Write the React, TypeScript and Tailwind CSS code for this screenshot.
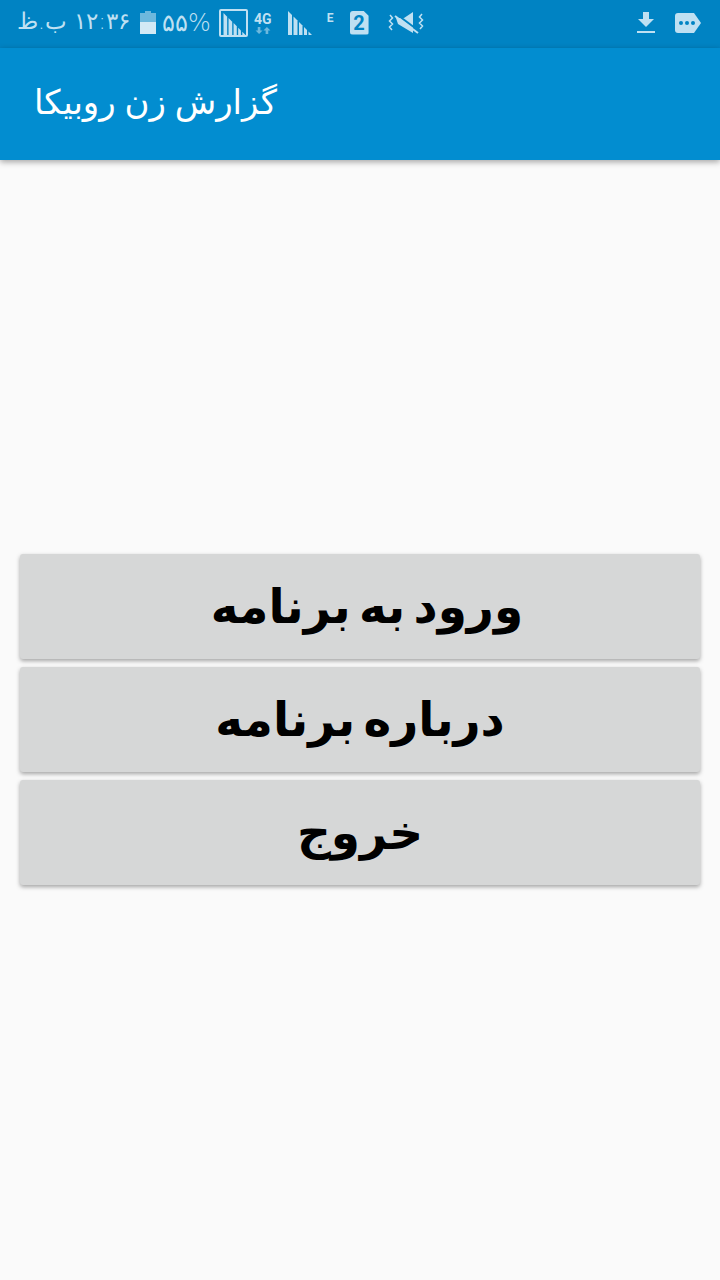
import React from 'react';

const ICON = '#bfe0f2';

function SignalBars({ className = '' }: { className?: string }) {
  return (
    <svg viewBox="0 0 24 24" className={className} fill={ICON}>
      <path d="M0 0l4 4v20H0z" />
      <path d="M5.500 5.500l4 4V24h-4z" />
      <path d="M11 11l3.500 3.500V24H11z" />
      <path d="M16 16l3 3v5h-3z" />
      <path d="M20.500 20.500L24 24h-3.500z" />
    </svg>
  );
}

function StatusBar() {
  return (
    <div className="h-12 bg-[#0083c3] flex items-center pl-[17px] pr-[19px] text-[#bfe0f2] shrink-0">
      <span dir="rtl" className="text-[23px] leading-none mb-[6px] font-['DejaVu_Sans',sans-serif] font-extralight w-[113px] whitespace-nowrap">۱۲:۳۶ ب.ظ</span>

      {/* battery */}
      <div className="ml-[10px] w-[16px] h-[25px] mt-[-2px] flex flex-col items-center">
        <div className="w-[6px] h-[2px] bg-[#6db8dd]" />
        <div className="w-[16px] h-[9px] bg-[#6db8dd]" />
        <div className="w-[16px] h-[12px] bg-[#d3e9f5]" />
      </div>

      <span className="ml-[6px] text-[24px] leading-none mb-[3px] font-['DejaVu_Sans',sans-serif] font-extralight whitespace-nowrap">۵۵%</span>

      {/* boxed signal */}
      <div className="ml-[8px] w-[29px] h-[28px] border-2 border-[#bfe0f2] rounded-[2px] p-[2px] pb-0 pr-0 mt-[-2px] flex">
        <SignalBars className="w-full h-full" />
      </div>

      {/* 4G */}
      <div className="ml-[5px] w-[20px] flex flex-col items-center mt-[-3px]">
        <span className="text-[14px] leading-[14px] font-bold font-['Roboto',sans-serif]">4G</span>
        <svg viewBox="0 0 18 8" className="w-[16px] h-[7px] mt-[1px]" fill="#6db8dd">
          <path d="M3 0h3v4h2.500L4.500 8 .5 4H3zM12 8h3V4h2.500L13.500 0 9.500 4H12z" />
        </svg>
      </div>

      <SignalBars className="ml-[15px] w-[24px] h-[24px] mt-[-2px]" />

      <span className="ml-[15px] text-[12px] leading-none font-bold font-['Roboto',sans-serif] mb-[12px]">E</span>

      {/* sim 2 */}
      <div className="ml-[16px] w-[19px] h-[24px] mt-[-3px] bg-[#bfe0f2] rounded-[3px] [clip-path:polygon(0_0,72%_0,100%_22%,100%_100%,0_100%)] flex items-center justify-center">
        <span className="text-[#0083c3] text-[20px] leading-none font-bold font-['Roboto',sans-serif]">2</span>
      </div>

      {/* vibrate / muted */}
      <svg viewBox="0 0 36 24" className="ml-[19px] w-[36px] h-[24px] mt-[-3px]">
        <path d="M2 4l2.500 3-3 3 3 3-3 3 2.500 3M34 3l-2.500 3 3 3-3 3 3 3-2.500 3" fill="none" stroke={ICON} strokeWidth="1.500" />
        <path d="M8 7h8l9-6v21l-5-3-10-6z" fill={ICON} />
        <path d="M7 2l24 18" stroke="#0083c3" strokeWidth="2" />
        <path d="M7 5l23 17" stroke={ICON} strokeWidth="2" />
      </svg>

      <div className="flex-1" />

      {/* download */}
      <svg viewBox="0 0 18 22" className="w-[18px] h-[22px] mt-[-2px]" fill={ICON}>
        <path d="M6 0h6v7h5l-8 8-8-8h5zM0 19h18v2H0z" />
      </svg>

      {/* tag with dots */}
      <svg viewBox="0 0 26 20" className="ml-[20px] w-[26px] h-[20px] mt-[-2px]">
        <path d="M3 0h16l7 10-7 10H3a3 3 0 0 1-3-3V3a3 3 0 0 1 3-3z" fill={ICON} />
        <circle cx="6" cy="10" r="2" fill="#0083c3" />
        <circle cx="12" cy="10" r="2" fill="#0083c3" />
        <circle cx="18" cy="10" r="2" fill="#0083c3" />
      </svg>
    </div>
  );
}

function MenuButton({ label, className = '' }: { label: string; className?: string }) {
  return (
    <button className={`h-[105px] w-full bg-[#d6d7d7] rounded-[3px] shadow-[0_2px_4px_rgba(0,0,0,0.35)] flex items-center justify-center text-black text-[47px] font-bold leading-none [word-spacing:-8px] font-['DejaVu_Sans',sans-serif] ${className}`}>
      <span dir="rtl">{label}</span>
    </button>
  );
}

export default function App() {
  return (
    <main className="w-[720px] h-[1280px] bg-[#fafafa] flex flex-col overflow-hidden">
      <StatusBar />

      <header className="h-28 bg-[#028dd0] shadow-[0_2px_6px_rgba(0,0,0,0.35)] flex items-center pl-[34px] shrink-0 z-10">
        <h1 dir="rtl" className="text-[34px] text-white leading-none mb-[4px] [word-spacing:-2px] font-['DejaVu_Sans',sans-serif] font-normal">گزارش زن روبیکا</h1>
      </header>

      {/* button group centred in what's left under the bar */}
      <div className="flex-1 flex flex-col justify-center gap-2 px-5 pb-[2px]">
        <MenuButton label="ورود به برنامه" className="pl-[14px]" />
        <MenuButton label="درباره برنامه" />
        <MenuButton label="خروج" />
      </div>
    </main>
  );
}
